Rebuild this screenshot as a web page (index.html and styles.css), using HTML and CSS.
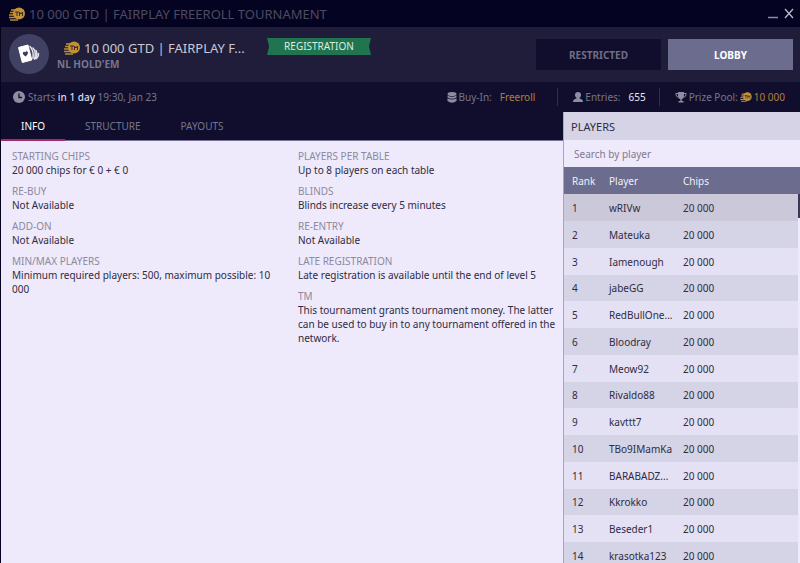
FILE: index.html
```html
<!DOCTYPE html>
<html lang="en">
<head>
    <meta charset="UTF-8">
    <meta name="viewport" content="width=device-width, initial-scale=1.0">
    <title>10 000 GTD | FAIRPLAY FREEROLL TOURNAMENT</title>
    <link rel="stylesheet" href="styles.css">
</head>
<body>

<!-- shared tournament money coin -->
<svg class="sprite" aria-hidden="true">
    <symbol id="coin" viewBox="0 0 16 14">
        <g fill="none" stroke="#b98a35" stroke-width="1.5">
            <path d="M2 3h5M1 5.500h6M0 8h7M0 10.500h9M1 13h8"/>
        </g>
        <ellipse cx="10" cy="6.500" rx="6" ry="6" fill="#c29138"/>
        <path d="M6 5h4M8 5v4M10.500 9V5l1.500 2 1.500-2v4" fill="none" stroke="#3a2b28" stroke-width="1"/>
    </symbol>
</svg>

<div class="window">
    <div class="title-bar">
        <svg class="coin"><use href="#coin"/></svg>
        <span class="window-title">10 000 GTD | FAIRPLAY FREEROLL TOURNAMENT</span>
        <button class="window-button" aria-label="Minimize">
            <svg width="10" height="12" viewBox="0 0 10 12"><path d="M0 9.500h10" stroke="#8c8ca0" stroke-width="1.500"/></svg>
        </button>
        <button class="window-button" aria-label="Close">
            <svg width="10" height="12" viewBox="0 0 10 12"><path d="M1 1l8 9M9 1l-8 9" stroke="#b9b9c8" stroke-width="1.300"/></svg>
        </button>
    </div>

    <header>
        <div class="game-icon">
            <svg width="24" height="22" viewBox="0 0 24 22">
                <g fill="none" stroke="#e6e6f0" stroke-width="1.500" stroke-linecap="round">
                    <path d="M13 3.500q4 4 3 12"/>
                    <path d="M16 5q3.500 4 1.500 11"/>
                    <path d="M19 7.500q2 4-.5 8"/>
                    <path d="M21.500 10.500q.5 2.500-2 5"/>
                </g>
                <path d="M1.500 4.500L11 2l3.800 15L5.300 19.500z" fill="#fff" stroke="#fff" stroke-linejoin="round"/>
                <path d="M8.900 13.600c-1.800-1.400-3.300-2.200-3-3.900.3-1.300 1.800-1.300 2.300-.3.400-1.200 2-1.600 2.600-.4.700 1.500-.8 2.700-1.900 4.600z" fill="#3a3a5c"/>
            </svg>
        </div>
        <div class="game-name">
            <h1><svg class="coin"><use href="#coin"/></svg>10 000 GTD | FAIRPLAY F...</h1>
            <p>NL HOLD'EM</p>
        </div>
        <span class="status">REGISTRATION</span>
        <div class="header-buttons">
            <button class="restricted">RESTRICTED</button>
            <button class="lobby">LOBBY</button>
        </div>
    </header>

    <div class="summary">
        <div class="starts">
            <svg width="12" height="12" viewBox="0 0 12 12"><circle cx="6" cy="6" r="6" fill="#8e8ea3"/><path d="M6 2.500V6.500h3" fill="none" stroke="#100e2c" stroke-width="1.300"/></svg>
            <span>Starts <b>in 1 day</b> 19:30, Jan 23</span>
        </div>
        <div class="summary-item buy-in">
            <svg width="10" height="11" viewBox="0 0 10 11" fill="#8e8ea3"><ellipse cx="5" cy="2" rx="4.500" ry="2"/><path d="M.5 3.500q4.500 2.500 9 0v1.700q-4.500 3-9 0z"/><path d="M.5 6.300q4.500 2.500 9 0V9q-4.500 3.500-9 0z"/></svg>
            <span>Buy-In:</span>
            <span class="value gold">Freeroll</span>
        </div>
        <div class="summary-item entries">
            <svg width="10" height="11" viewBox="0 0 10 11" fill="#8e8ea3"><circle cx="5" cy="3" r="3"/><path d="M3.500 5h3v1.500Q10 7 10 10H0q0-3 3.500-3.500z"/></svg>
            <span>Entries:</span>
            <span class="value white">655</span>
        </div>
        <div class="summary-item">
            <svg width="12" height="11" viewBox="0 0 12 11"><path d="M3 0h6v3q0 3.500-2.300 4.200V9H8.500v1.500h-5V9h1.800V7.200Q3 6.500 3 3z" fill="#8e8ea3"/><path d="M3 1.500H.8q0 3.500 3 4M9 1.500h2.200q0 3.500-3 4" fill="none" stroke="#8e8ea3"/></svg>
            <span>Prize Pool:</span>
            <span class="prize gold"><svg class="small-coin"><use href="#coin"/></svg>10 000</span>
        </div>
    </div>

    <div class="content">
        <main>
            <nav class="tabs">
                <a href="#info" class="active">INFO</a>
                <a href="#structure">STRUCTURE</a>
                <a href="#payouts">PAYOUTS</a>
            </nav>
            <div class="info" id="info">
                <dl>
                    <dt>STARTING CHIPS</dt>
                    <dd>20 000 chips for € 0 + € 0</dd>
                    <dt>RE-BUY</dt>
                    <dd>Not Available</dd>
                    <dt>ADD-ON</dt>
                    <dd>Not Available</dd>
                    <dt>MIN/MAX PLAYERS</dt>
                    <dd>Minimum required players: 500, maximum possible: 10 000</dd>
                </dl>
                <dl>
                    <dt>PLAYERS PER TABLE</dt>
                    <dd>Up to 8 players on each table</dd>
                    <dt>BLINDS</dt>
                    <dd>Blinds increase every 5 minutes</dd>
                    <dt>RE-ENTRY</dt>
                    <dd>Not Available</dd>
                    <dt>LATE REGISTRATION</dt>
                    <dd>Late registration is available until the end of level 5</dd>
                    <dt>TM</dt>
                    <dd>This tournament grants tournament money. The latter can be used to buy in to any tournament offered in the network.</dd>
                </dl>
            </div>
        </main>

        <aside class="players">
            <h2>PLAYERS</h2>
            <input type="text" placeholder="Search by player" aria-label="Search by player">
            <div class="player-list">
                <table>
                    <thead>
                        <tr><th class="rank">Rank</th><th class="player">Player</th><th>Chips</th></tr>
                    </thead>
                    <tbody>
                        <tr class="selected"><td>1</td><td>wRIVw</td><td>20 000</td></tr>
                        <tr><td>2</td><td>Mateuka</td><td>20 000</td></tr>
                        <tr><td>3</td><td>Iamenough</td><td>20 000</td></tr>
                        <tr><td>4</td><td>jabeGG</td><td>20 000</td></tr>
                        <tr><td>5</td><td>RedBullOne...</td><td>20 000</td></tr>
                        <tr><td>6</td><td>Bloodray</td><td>20 000</td></tr>
                        <tr><td>7</td><td>Meow92</td><td>20 000</td></tr>
                        <tr><td>8</td><td>Rivaldo88</td><td>20 000</td></tr>
                        <tr><td>9</td><td>kavttt7</td><td>20 000</td></tr>
                        <tr><td>10</td><td>TBo9IMamKa</td><td>20 000</td></tr>
                        <tr><td>11</td><td>BARABADZ...</td><td>20 000</td></tr>
                        <tr><td>12</td><td>Kkrokko</td><td>20 000</td></tr>
                        <tr><td>13</td><td>Beseder1</td><td>20 000</td></tr>
                        <tr><td>14</td><td>krasotka123</td><td>20 000</td></tr>
                    </tbody>
                </table>
                <div class="scroll-track"><div class="scroll-thumb"></div></div>
            </div>
        </aside>
    </div>
</div>

</body>
</html>
```
FILE: styles.css
```css
* {
    margin: 0;
    padding: 0;
    box-sizing: border-box;
}

body {
    font-family: 'Noto Sans', 'Open Sans', sans-serif;
    font-size: 10px;
    background-color: #100e2c;
    color: #2f2c42;
}

button {
    font-family: inherit;
    border: none;
    cursor: pointer;
}

.sprite {
    position: absolute;
    width: 0;
    height: 0;
}

.window {
    height: 100vh;
    display: flex;
    flex-direction: column;
    overflow: hidden;
    border-left: 1px solid #04021c;
}

.title-bar {
    display: flex;
    align-items: center;
    height: 27px;
    flex-shrink: 0;
    padding: 0 6px 0 8px;
    background-color: #050322;
}

.coin {
    width: 16px;
    height: 14px;
    margin-right: 4px;
}

.window-title {
    flex: 1;
    font-size: 13px;
    color: #4c4b60;
}

.window-button {
    width: 10px;
    height: 12px;
    margin-left: 6px;
    background: none;
}

.window-button svg {
    display: block;
}

header {
    display: flex;
    height: 55px;
    flex-shrink: 0;
    padding: 0 7px 0 8px;
    background-color: #1f1d39;
}

.game-icon {
    display: flex;
    align-items: center;
    justify-content: center;
    width: 40px;
    height: 40px;
    margin-top: 7px;
    border-radius: 50%;
    background-color: #414163;
}

.game-name {
    width: 218px;
    padding: 12px 0 0 8px;
}

.game-name h1 {
    display: flex;
    align-items: center;
    height: 18px;
    padding-left: 7px;
    font-size: 13px;
    font-weight: 400;
    color: #c9c8d6;
    white-space: nowrap;
}

.game-name p {
    line-height: 14px;
    font-weight: 700;
    color: #77768d;
}

.status {
    width: 104px;
    height: 17px;
    margin-top: 11px;
    line-height: 17px;
    text-align: center;
    color: #d9efe5;
    background-color: #20744f;
    clip-path: polygon(0 0, 100% 0, 98% 50%, 100% 100%, 0 100%, 2% 50%);
}

.header-buttons {
    display: flex;
    gap: 7px;
    margin: 12px 0 0 auto;
}

.header-buttons button {
    width: 125px;
    height: 31px;
    font-size: 10px;
    font-weight: 700;
}

.restricted {
    color: #6f6e86;
    background-color: #100e2c;
}

.lobby {
    color: #fff;
    background-color: #6b6c8e;
}

.summary {
    display: flex;
    align-items: center;
    height: 30px;
    flex-shrink: 0;
    padding-left: 12px;
    color: #77768d;
}

.starts {
    display: flex;
    align-items: center;
    gap: 3px;
    margin-right: auto;
}

.starts b {
    font-weight: 500;
    color: #dcdbe8;
}

.summary-item {
    display: flex;
    align-items: center;
    gap: 2px;
    height: 18px;
    padding: 0 15px;
}

.buy-in,
.entries {
    border-right: 1px solid #302e4c;
}

.buy-in {
    padding-right: 22px;
}

.entries {
    padding-right: 13px;
}

.value {
    margin-left: 6px;
}

.gold {
    color: #b07f3f;
}

.white {
    color: #e8e8f2;
}

.prize {
    display: flex;
    align-items: center;
    gap: 2px;
}

.small-coin {
    width: 12px;
    height: 10px;
}

.content {
    display: grid;
    grid-template-columns: minmax(0, 1fr) 237px;
    flex: 1;
    min-height: 0;
}

main {
    display: flex;
    flex-direction: column;
    background-color: #eee9fb;
}

.tabs {
    display: flex;
    height: 29px;
    background-color: #100e2c;
    border-bottom: 1px solid #77719a;
}

.tabs a {
    padding: 0 20px;
    line-height: 28px;
    color: #77768d;
    text-decoration: none;
}

.tabs .active {
    height: 29px;
    color: #fff;
    border-bottom: 2px solid #a32a6c;
}

.info {
    display: grid;
    grid-template-columns: 1fr 1fr;
    gap: 24px;
    padding: 9px 3px 0 11px;
}

dt {
    line-height: 13px;
    color: #8d899d;
}

dd {
    margin-bottom: 8px;
    line-height: 14px;
}

.players {
    display: flex;
    flex-direction: column;
    min-height: 0;
    border-left: 1px solid #aaa6c2;
    background-color: #eee9fb;
}

.players h2 {
    height: 28px;
    flex-shrink: 0;
    padding-left: 7px;
    line-height: 29px;
    font-size: 11px;
    font-weight: 400;
    background-color: #d6d3e7;
}

.players input {
    height: 27px;
    flex-shrink: 0;
    padding-left: 10px;
    font-family: inherit;
    font-size: 10px;
    color: #2f2c42;
    border: none;
    background: none;
}

.players input::placeholder {
    color: #7f7b90;
}

.player-list {
    position: relative;
    min-height: 0;
    overflow: hidden;
}

.player-list table {
    width: 100%;
    table-layout: fixed;
    border-collapse: collapse;
}

th {
    height: 27px;
    padding-left: 8px;
    text-align: left;
    font-weight: 400;
    color: #f0eff7;
    background-color: #6b6c8e;
}

.rank {
    width: 37px;
}

.player {
    width: 74px;
}

td {
    height: 27px;
    padding-left: 8px;
    white-space: nowrap;
}

tbody tr {
    background-color: #e4e1f5;
}

tbody tr:nth-child(even) {
    background-color: #d5d3e6;
}

tbody tr:nth-child(4n) td {
    height: 26px;
}

tbody .selected {
    background-color: #cbc8da;
}

.scroll-track {
    position: absolute;
    top: 27px;
    right: 0;
    bottom: 0;
    width: 2px;
    background-color: #eee9fb;
}

.scroll-thumb {
    height: 24px;
    background-color: #3a3856;
}
```
